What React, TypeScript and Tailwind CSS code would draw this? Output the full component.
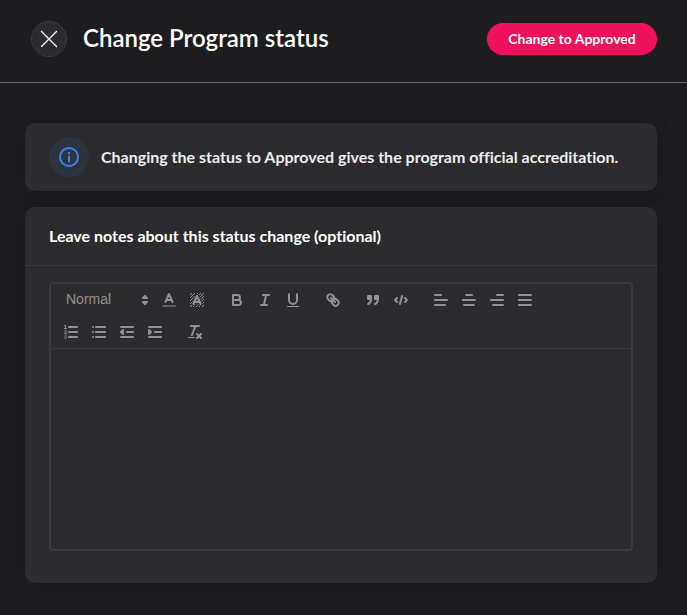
import React, { useState } from 'react';

interface ToolButtonProps {
  label: string;
  children: React.ReactNode;
}

const ToolButton: React.FC<ToolButtonProps> = ({ label, children }) => (
  <button
    type="button"
    aria-label={label}
    className="flex h-6 w-7 items-center justify-center text-[#929295] hover:text-white"
  >
    <svg
      viewBox="0 0 18 18"
      width={18}
      height={18}
      fill="none"
      stroke="currentColor"
      strokeWidth={2}
      strokeLinecap="round"
      strokeLinejoin="round"
    >
      {children}
    </svg>
  </button>
);

const Group: React.FC<{ children: React.ReactNode }> = ({ children }) => (
  <div className="flex items-center">{children}</div>
);

const BlockFormatSelect: React.FC = () => (
  <div className="relative h-6 w-[98px] text-[#929295]">
    <select
      aria-label="Block format"
      defaultValue="normal"
      className="block h-[22px] w-full cursor-pointer appearance-none bg-transparent pl-[9px] text-sm font-medium outline-none [font-family:'Liberation_Sans',Arial,sans-serif]"
    >
      <option value="normal">Normal</option>
      <option value="h1">Heading 1</option>
      <option value="h2">Heading 2</option>
    </select>
    <svg
      viewBox="0 0 18 18"
      className="pointer-events-none absolute top-[3px] right-px size-[18px]"
      fill="currentColor"
      stroke="currentColor"
      strokeWidth={2}
      strokeLinejoin="round"
    >
      <polygon points="7 11 9 13 11 11 7 11" />
      <polygon points="7 7 9 5 11 7 7 7" />
    </svg>
  </div>
);

const Toolbar: React.FC = () => (
  <div
    role="toolbar"
    aria-label="Formatting"
    className="flex flex-wrap gap-x-3 gap-y-2 border-b border-[#3a3a3c] px-1.5 py-1"
  >
    <Group>
      <BlockFormatSelect />
      <ToolButton label="Text color">
        <line x1="3" x2="15" y1="15" y2="15" strokeOpacity={0.5} />
        <polyline points="5.5 11 9 3 12.5 11" />
        <line x1="11.63" x2="6.38" y1="9" y2="9" />
      </ToolButton>
      <ToolButton label="Background color">
        <defs>
          <pattern id="hatch" width="3" height="3" patternUnits="userSpaceOnUse">
            <path d="M2 0h1v1h-1zM1 1h1v1h-1zM0 2h1v1h-1z" fill="currentColor" stroke="none" />
          </pattern>
        </defs>
        <rect x="2" y="2" width="14" height="14" fill="url(#hatch)" stroke="none" />
        <path d="M5.5 13L9 5L12.5 13M11.63 11H6.38" stroke="#2c2c2e" strokeWidth={4} />
        <polyline points="5.5 13 9 5 12.5 13" />
        <line x1="11.63" x2="6.38" y1="11" y2="11" />
      </ToolButton>
    </Group>
    <Group>
      <ToolButton label="Bold">
        <path d="M5,4H9.5A2.5,2.5,0,0,1,12,6.5v0A2.5,2.5,0,0,1,9.5,9H5V4Z" />
        <path d="M5,9h5.5A2.5,2.5,0,0,1,13,11.5v0A2.5,2.5,0,0,1,10.5,14H5V9Z" />
      </ToolButton>
      <ToolButton label="Italic">
        <line x1="7" x2="13" y1="4" y2="4" />
        <line x1="5" x2="11" y1="14" y2="14" />
        <line x1="8" x2="10" y1="14" y2="4" />
      </ToolButton>
      <ToolButton label="Underline">
        <path d="M5,3V9a4.012,4.012,0,0,0,4,4H9a4.012,4.012,0,0,0,4-4V3" />
        <rect x="3" y="15" width="12" height="1" rx="0.5" fill="currentColor" stroke="none" />
      </ToolButton>
    </Group>
    <Group>
      <ToolButton label="Link">
        <line x1="7" x2="11" y1="7" y2="11" />
        <path d="M8.9,4.577a3.476,3.476,0,0,1,.36,4.679A3.476,3.476,0,0,1,4.577,8.9C3.185,7.5,2.035,6.4,4.217,4.217S7.5,3.185,8.9,4.577Z" />
        <path d="M13.423,9.1a3.476,3.476,0,0,0-4.679-.36,3.476,3.476,0,0,0,.36,4.679c1.392,1.392,2.5,2.542,4.679.36S14.815,10.5,13.423,9.1Z" />
      </ToolButton>
    </Group>
    <Group>
      <ToolButton label="Blockquote">
        <rect x="4" y="5" width="3" height="3" fill="currentColor" />
        <rect x="11" y="5" width="3" height="3" fill="currentColor" />
        <path d="M7,8c0,4.031-3,5-3,5" fill="currentColor" fillRule="evenodd" />
        <path d="M14,8c0,4.031-3,5-3,5" fill="currentColor" fillRule="evenodd" />
      </ToolButton>
      <ToolButton label="Code block">
        <polyline points="5 7 3 9 5 11" />
        <polyline points="13 7 15 9 13 11" />
        <line x1="10" x2="8" y1="5" y2="13" />
      </ToolButton>
    </Group>
    <Group>
      <ToolButton label="Align left">
        <path d="M3 4H9M3 9H15M3 14H13" />
      </ToolButton>
      <ToolButton label="Align center">
        <path d="M6 4H12M3 9H15M4 14H14" />
      </ToolButton>
      <ToolButton label="Align right">
        <path d="M9 4H15M3 9H15M5 14H15" />
      </ToolButton>
      <ToolButton label="Justify">
        <path d="M3 4H15M3 9H15M3 14H15" />
      </ToolButton>
    </Group>
    <Group>
      <ToolButton label="Ordered list">
        <path d="M7 4H15M7 9H15M7 14H15" />
        <line x1="2.5" x2="4.5" y1="5.5" y2="5.5" strokeWidth={1} />
        <path
          d="M3.5,6A0.5,0.5,0,0,1,3,5.5V3.085l-0.276.138A0.5,0.5,0,0,1,2.053,3c-0.124-.247-0.023-0.324.224-0.447l1-.5A0.5,0.5,0,0,1,4,2.5v3A0.5,0.5,0,0,1,3.5,6Z"
          fill="currentColor"
          stroke="none"
        />
        <path d="M4.5,10.5h-2c0-.234,1.85-1.076,1.85-2.234A0.959,0.959,0,0,0,2.5,8.156" strokeWidth={1} />
        <path
          d="M2.5,14.846a0.959,0.959,0,0,0,1.85-.109A0.7,0.7,0,0,0,3.75,14a0.688,0.688,0,0,0,.6-0.736,0.959,0.959,0,0,0-1.85-.109"
          strokeWidth={1}
        />
      </ToolButton>
      <ToolButton label="Bullet list">
        <path d="M6 4H15M6 9H15M6 14H15M3 4H3M3 9H3M3 14H3" />
      </ToolButton>
      <ToolButton label="Decrease indent">
        <path d="M3 4H15M9 9H15M3 14H15" />
        <polyline points="5 7 5 11 3 9 5 7" fill="currentColor" />
      </ToolButton>
      <ToolButton label="Increase indent">
        <path d="M3 4H15M9 9H15M3 14H15" />
        <polyline points="3 7 3 11 5 9 3 7" fill="currentColor" />
      </ToolButton>
    </Group>
    <Group>
      <ToolButton label="Clear formatting">
        <line x1="5" x2="13" y1="3" y2="3" />
        <line x1="6" x2="9.35" y1="12" y2="3" />
        <line x1="11" x2="15" y1="11" y2="15" />
        <line x1="15" x2="11" y1="11" y2="15" />
        <rect x="2" y="14" width="7" height="1" rx="0.5" fill="currentColor" stroke="none" />
      </ToolButton>
    </Group>
  </div>
);

export default function App() {
  const [notes, setNotes] = useState('');

  return (
    <div className="min-h-screen bg-[#1d1d1f] text-white [font-family:Lato,sans-serif] [font-variant-ligatures:none]">
      <header className="flex items-start justify-between border-b border-[#6a6a6c] pt-[21px] pr-[30px] pb-[25px] pl-[31px]">
        <div className="flex items-center gap-4">
          <button
            type="button"
            aria-label="Close"
            className="flex size-9 items-center justify-center rounded-full border border-[#3a3a3c] bg-[#2c2c2e]"
          >
            <svg viewBox="0 0 18 18" width={18} height={18} stroke="currentColor" strokeWidth={1.3} strokeLinecap="round">
              <path d="M1.5 1.5L16.5 16.5M16.5 1.5L1.5 16.5" />
            </svg>
          </button>
          <h1 className="pb-0.5 text-2xl font-semibold">Change Program status</h1>
        </div>
        <button
          type="button"
          className="mt-0.5 h-8 min-w-[170px] rounded-full bg-[#f0115c] px-5 text-sm font-bold hover:bg-[#d90f53]"
        >
          Change to Approved
        </button>
      </header>

      <main className="flex flex-col gap-4 pt-10 pr-[30px] pb-8 pl-[25px]">
        <section className="flex items-center gap-3 rounded-[10px] bg-[#2c2c2e] px-6 py-3.5 shadow-[0_0_20px_rgba(0,0,0,0.1)]">
          <div className="flex size-10 shrink-0 items-center justify-center rounded-full bg-[#2d3440] text-[#3b82e6]">
            <svg viewBox="0 0 20 20" width={20} height={20} fill="none" stroke="currentColor" strokeWidth={2}>
              <circle cx="10" cy="10" r="9" />
              <path d="M10 9V15" />
              <path d="M10 5V7.4" />
            </svg>
          </div>
          <p className="text-base font-bold text-[#ededee]">
            Changing the status to Approved gives the program official accreditation.
          </p>
        </section>

        <section className="rounded-[10px] bg-[#2c2c2e] shadow-[0_0_20px_rgba(0,0,0,0.1)]">
          <div className="border-b border-[#3a3a3c] px-6 py-[17px]">
            <label htmlFor="notes" className="block text-base font-bold">
              Leave notes about this status change (optional)
            </label>
          </div>
          <div className="px-6 pt-4 pb-8">
            <div className="rounded border-2 border-[#3a3a3c]">
              <Toolbar />
              <textarea
                id="notes"
                value={notes}
                onChange={(e) => setNotes(e.target.value)}
                className="block h-[200px] w-full resize-none bg-transparent px-4 py-3 text-sm outline-none"
              />
            </div>
          </div>
        </section>
      </main>
    </div>
  );
}
